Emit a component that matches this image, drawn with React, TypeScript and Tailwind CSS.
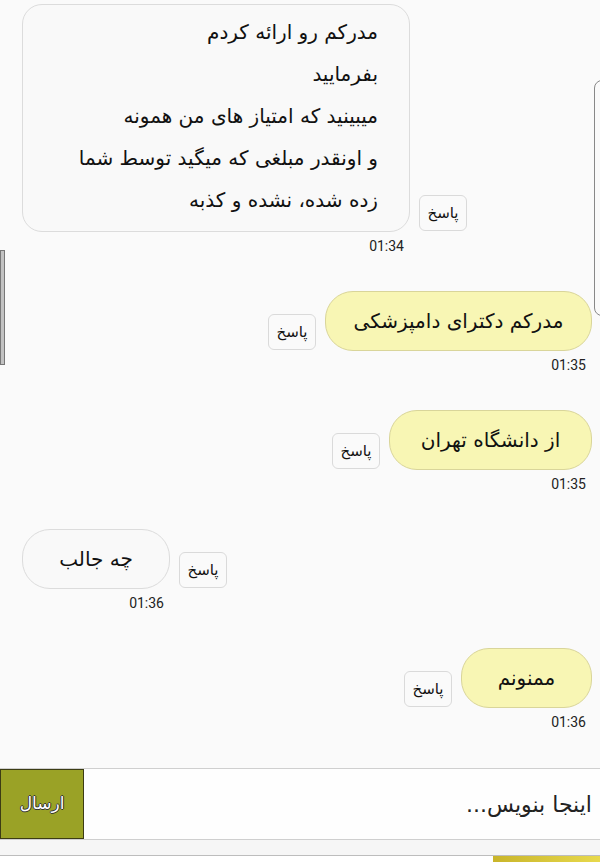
import React from 'react'

const FA = "font-['DejaVu_Sans',sans-serif]"

type Msg = {
  id: number
  lines: string[]
  time: string
  mine: boolean
  width: string
}

const messages: Msg[] = [
  {
    id: 1,
    lines: [
      'مدرکم رو ارائه کردم',
      'بفرمایید',
      'میبینید که امتیاز های من همونه',
      'و اونقدر مبلغی که میگید توسط شما',
      'زده شده، نشده و کذبه',
    ],
    time: '01:34',
    mine: false,
    width: 'w-[388px]',
  },
  { id: 2, lines: ['مدرکم دکترای دامپزشکی'], time: '01:35', mine: true, width: 'w-[267px]' },
  { id: 3, lines: ['از دانشگاه تهران'], time: '01:35', mine: true, width: 'w-[203px]' },
  { id: 4, lines: ['چه جالب'], time: '01:36', mine: false, width: 'w-[148px]' },
  { id: 5, lines: ['ممنونم'], time: '01:36', mine: true, width: 'w-[131px]' },
]

function ReplyButton() {
  return (
    <button
      className={`${FA} mb-px flex h-[36px] w-[48px] shrink-0 items-center justify-center rounded-[6px] border border-[#dadada] bg-[#fafafa] text-[15px] text-[#111]`}
      dir="rtl"
    >
      پاسخ
    </button>
  )
}

function Bubble({ msg }: { msg: Msg }) {
  const multi = msg.lines.length > 1
  return (
    <div
      dir="rtl"
      className={`${FA} ${msg.width} shrink-0 border text-[20px] text-[#111] ${
        msg.mine ? 'border-[#d9d59a] bg-[#f8f6b4]' : 'border-[#dcdcdc] bg-[#f9f9f9]'
      } ${
        multi
          ? 'rounded-[20px] pt-[6px] pr-[31px] pb-[10px] leading-[42px]'
          : 'flex h-[60px] items-center justify-center rounded-[28px]'
      }`}
    >
      {multi ? msg.lines.map((l, i) => <div key={i}>{l}</div>) : msg.lines[0]}
    </div>
  )
}

function Message({ msg }: { msg: Msg }) {
  return (
    <div className={`flex flex-col ${msg.mine ? 'items-end pr-[8px]' : 'items-start pl-[22px]'}`}>
      <div className="flex items-end gap-[9px]">
        {msg.mine ? (
          <>
            <ReplyButton />
            <Bubble msg={msg} />
          </>
        ) : (
          <>
            <Bubble msg={msg} />
            <ReplyButton />
          </>
        )}
      </div>
      <div className={`flex ${msg.mine ? 'w-full justify-end' : ''}`}>
        <div
          className={`${msg.width} mt-[6px] pr-[6px] text-right font-['Roboto',sans-serif] text-[14px] leading-[16px] text-[#222]`}
        >
          {msg.time}
        </div>
      </div>
    </div>
  )
}

export default function App() {
  return (
    <div className="relative flex h-[862px] w-[600px] flex-col overflow-hidden bg-[#fafafa]">
      {/* edge artifacts */}
      <div className="absolute top-[80px] right-[-20px] h-[236px] w-[26px] rounded-[8px] border border-[#888]" />
      <div className="absolute top-[250px] left-0 h-[115px] w-[5px] border border-[#777] bg-[#c2c2c2]" />

      <div className="flex flex-1 flex-col gap-[37px] pt-[4px]">
        {messages.map((m) => (
          <Message key={m.id} msg={m} />
        ))}
      </div>

      {/* input */}
      <div className="flex h-[72px] shrink-0 border-t border-b border-[#cfcfcf] bg-[#fefefe]">
        <button
          className={`${FA} flex w-[84px] items-center justify-center border border-[#3c3c14] bg-[#9aa226] text-[17px] text-white [text-shadow:_-1px_0_#333,_1px_0_#333,_0_1px_#333,_0_-1px_#333]`}
          dir="rtl"
        >
          ارسال
        </button>
        <div
          dir="rtl"
          className={`${FA} flex flex-1 items-center pr-[8px] text-[22px] text-[#222]`}
        >
          اینجا بنویس...
        </div>
      </div>
      <div className="h-[15px] shrink-0 bg-[#f6f6f6]" />
      <div className="flex h-[7px] shrink-0 justify-end border-t border-[#bdbdbd] bg-white">
        <div className="w-[107px] bg-gradient-to-r from-[#c9b52a] to-[#e8d94c]" />
      </div>
    </div>
  )
}
